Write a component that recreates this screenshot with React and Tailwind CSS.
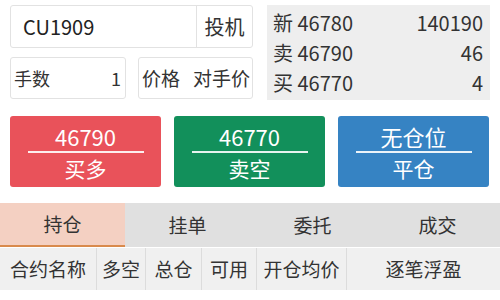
import React from "react";

const font = { fontFamily: '"Noto Sans CJK SC", "Noto Sans", sans-serif' };

const quotes = [
  ["新", "46780", "140190"],
  ["卖", "46790", "46"],
  ["买", "46770", "4"],
];

const actions = [
  { top: "46790", bottom: "买多", bg: "bg-[#e9525a]" },
  { top: "46770", bottom: "卖空", bg: "bg-[#12905b]" },
  { top: "无仓位", bottom: "平仓", bg: "bg-[#3683c3]" },
];

const tabs = ["持仓", "挂单", "委托", "成交"];

const cols = [
  { label: "合约名称", w: "w-[97px]" },
  { label: "多空", w: "w-[49px]" },
  { label: "总仓", w: "w-[56px]" },
  { label: "可用", w: "w-[55px]" },
  { label: "开仓均价", w: "w-[90px]" },
  { label: "逐笔浮盈", w: "flex-1" },
];

export default function App() {
  return (
    <div className="w-[500px] h-[300px] bg-white overflow-hidden text-[#333]" style={font}>
      {/* top: order inputs + quotes */}
      <div className="flex pt-[5px] pl-[10px] gap-[14px]">
        <div className="w-[243px] flex flex-col gap-[9px]">
          <div className="h-[43px] flex border border-[#e2e2e2] rounded-[3px]">
            <div className="flex-1 flex items-center pl-[12px] text-[20px] text-[#222]">CU1909</div>
            <div className="w-[56px] border-l border-[#e2e2e2] flex items-center justify-center text-[20px]">投机</div>
          </div>
          <div className="flex gap-[12px]">
            <div className="w-[116px] h-[42px] border border-[#e2e2e2] rounded-[3px] flex items-center justify-between pl-[3px] pr-[4px] text-[18px]">
              <span>手数</span>
              <span>1</span>
            </div>
            <div className="flex-1 h-[42px] border border-[#e2e2e2] rounded-[3px] flex items-center justify-between pl-[3px] pr-[2px] text-[19px]">
              <span>价格</span>
              <span>对手价</span>
            </div>
          </div>
        </div>
        <div className="w-[223px] h-[95px] bg-[#eeeeee] flex flex-col justify-center pl-[6px] pr-[7px] text-[20px] leading-[30px]">
          {quotes.map(([k, p, v]) => (
            <div key={k} className="flex justify-between">
              <span>{k} {p}</span>
              <span>{v}</span>
            </div>
          ))}
        </div>
      </div>

      {/* action buttons */}
      <div className="flex gap-[13px] pl-[10px] mt-[16px]">
        {actions.map((a) => (
          <div key={a.bottom} className={`w-[151px] h-[71px] rounded-[3px] ${a.bg} text-white flex flex-col items-center justify-center`}>
            <div className="text-[22px] leading-[30px]">{a.top}</div>
            <div className="w-[116px] h-[2px] bg-white/90" />
            <div className="text-[21px] leading-[30px]">{a.bottom}</div>
          </div>
        ))}
      </div>

      {/* tabs */}
      <div className="flex mt-[16px] h-[44px]">
        {tabs.map((t, i) => (
          <div
            key={t}
            className={
              i === 0
                ? "w-[125px] bg-[#f4d0c2] border-b-2 border-[#d98a4c] flex items-center justify-center text-[19px]"
                : "w-[125px] bg-[#e0e0e0] flex items-center justify-center text-[19px]"
            }
          >
            {t}
          </div>
        ))}
      </div>

      {/* position header */}
      <div className="flex h-[42px] bg-[#f0f0f0] mt-px">
        {cols.map((c, i) => (
          <div
            key={c.label}
            className={`${c.w} flex items-center justify-center text-[19px] ${i < cols.length - 1 ? "border-r border-[#dcdcdc]" : ""}`}
          >
            {c.label}
          </div>
        ))}
      </div>
    </div>
  );
}
